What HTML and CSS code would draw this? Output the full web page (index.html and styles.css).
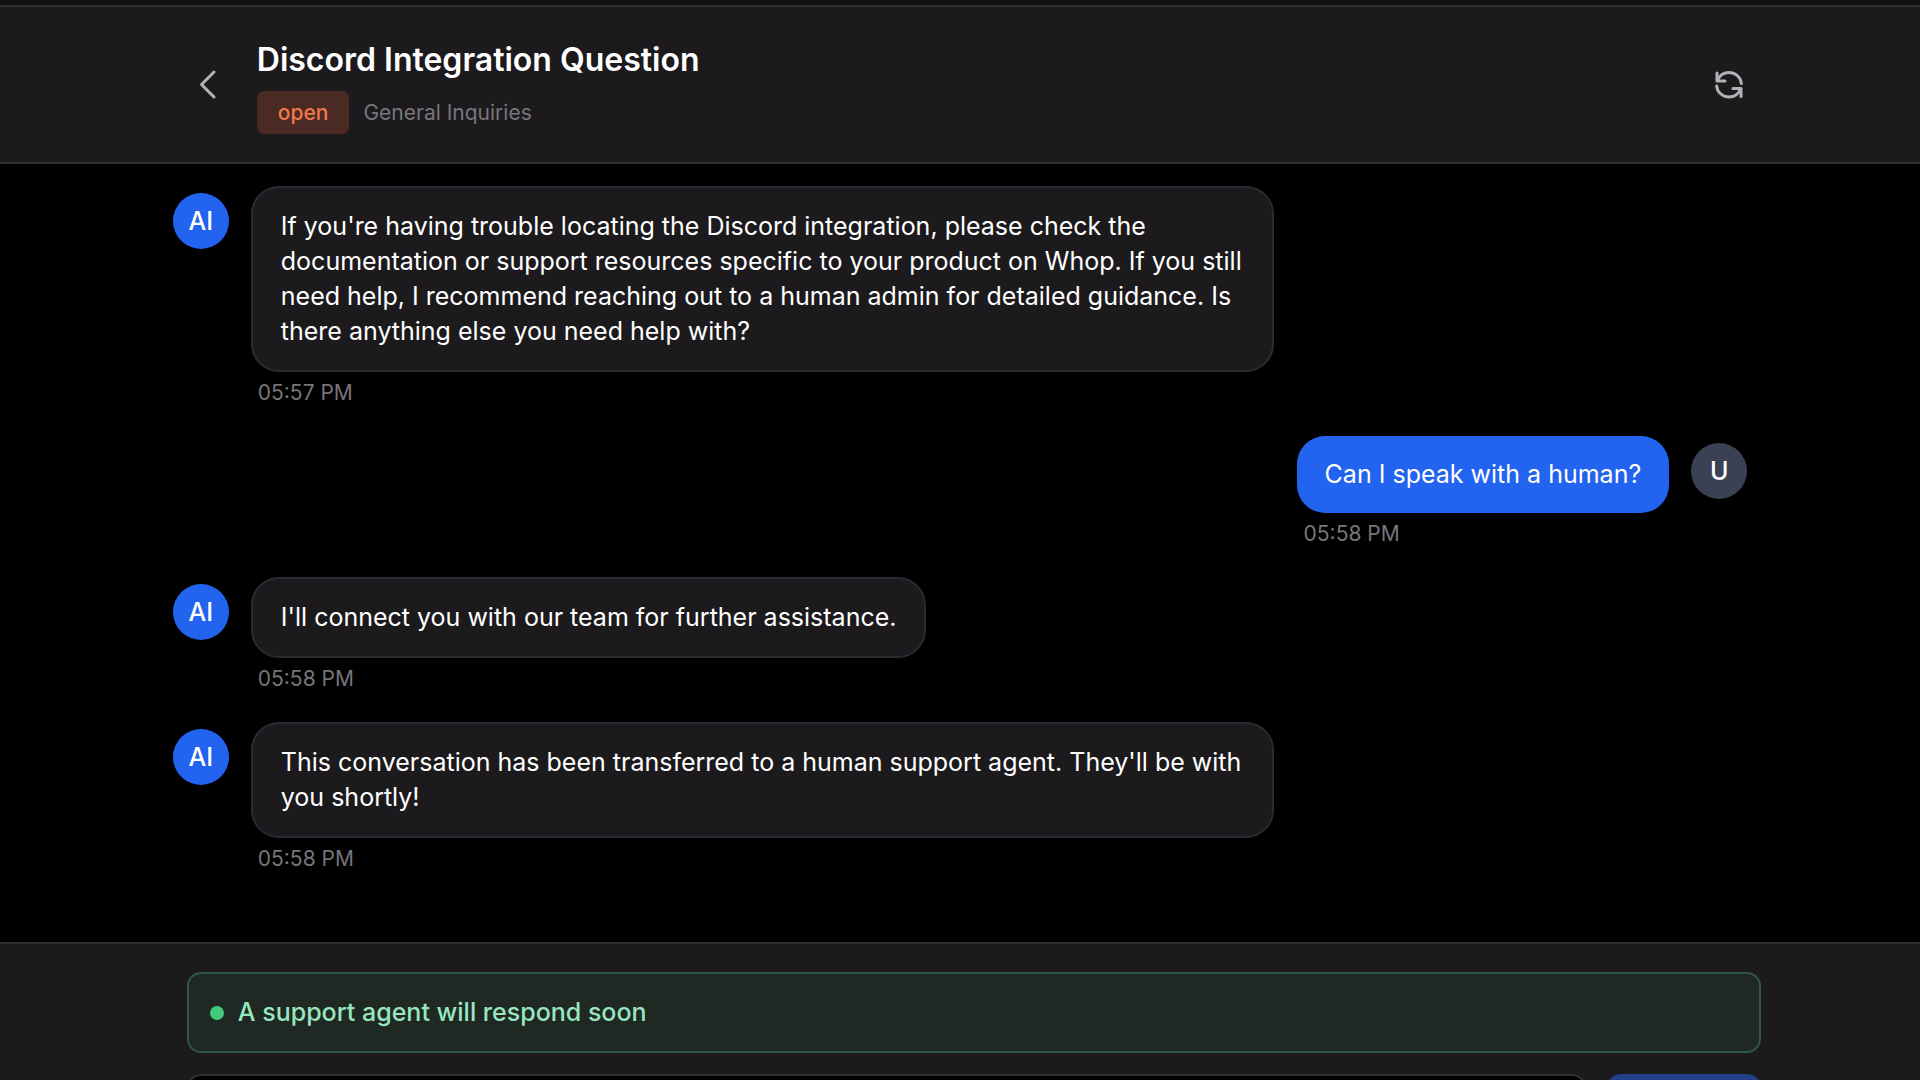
FILE: index.html
```html
<!DOCTYPE html>
<html lang="en">
<head>
    <meta charset="UTF-8">
    <meta name="viewport" content="width=device-width, initial-scale=1.0">
    <title>Discord Integration Question</title>
    <link rel="stylesheet" href="styles.css">
</head>
<body>
    <div class="top-strip"></div>

    <header class="chat-header">
        <div class="container header-row">
            <button class="icon-btn back-btn" type="button" aria-label="Back">
                <svg width="42" height="42" viewBox="0 0 42 42" fill="none" stroke="currentColor" stroke-width="3" stroke-linecap="round" stroke-linejoin="round">
                    <path d="M27 8 L14.500 20.500 L27 33"/>
                </svg>
            </button>
            <div class="header-info">
                <h1>Discord Integration Question</h1>
                <div class="meta">
                    <span class="badge">open</span>
                    <span class="category">General Inquiries</span>
                </div>
            </div>
            <button class="icon-btn refresh-btn" type="button" aria-label="Refresh">
                <svg width="36" height="36" viewBox="0 0 36 36" fill="none" stroke="currentColor" stroke-width="3" stroke-linecap="round" stroke-linejoin="round">
                    <path d="M6 6V14H14"/>
                    <path d="M6.500 13.500C8.500 8.500 13 5.500 18 5.500C24.500 5.500 30 10.500 30.300 16.500"/>
                    <path d="M30 29.500V21.500H22"/>
                    <path d="M29.500 22C27.500 27 23 30 18 30C11.500 30 6 25 5.700 19"/>
                </svg>
            </button>
        </div>
    </header>

    <main class="messages">
        <div class="container message-list">
            <div class="message">
                <div class="avatar">AI</div>
                <div class="message-body">
                    <p class="bubble">If you're having trouble locating the Discord integration, please check the documentation or support resources specific to your product on Whop. If you still need help, I recommend reaching out to a human admin for detailed guidance. Is there anything else you need help with?</p>
                    <time class="time">05:57 PM</time>
                </div>
            </div>

            <div class="message user">
                <div class="avatar">U</div>
                <div class="message-body">
                    <p class="bubble">Can I speak with a human?</p>
                    <time class="time">05:58 PM</time>
                </div>
            </div>

            <div class="message">
                <div class="avatar">AI</div>
                <div class="message-body">
                    <p class="bubble">I'll connect you with our team for further assistance.</p>
                    <time class="time">05:58 PM</time>
                </div>
            </div>

            <div class="message">
                <div class="avatar">AI</div>
                <div class="message-body">
                    <p class="bubble">This conversation has been transferred to a human support agent. They'll be with you shortly!</p>
                    <time class="time">05:58 PM</time>
                </div>
            </div>
        </div>
    </main>

    <footer class="chat-footer">
        <div class="container">
            <div class="notice" role="status">
                <span class="dot"></span>
                <span>A support agent will respond soon</span>
            </div>
            <form class="composer">
                <input class="composer-input" type="text" aria-label="Message">
                <button class="send-btn" type="submit" aria-label="Send" disabled>
                    <svg width="28" height="28" viewBox="0 0 28 28" fill="none" stroke="currentColor" stroke-width="3" stroke-linecap="round" stroke-linejoin="round">
                        <path d="M4 14H24M15 5L24 14L15 23"/>
                    </svg>
                </button>
            </form>
        </div>
    </footer>
</body>
</html>
```

FILE: styles.css
```css
* {
    box-sizing: border-box;
}
body {
    margin: 0;
    height: 100vh;
    overflow: hidden;
    background: #000;
    color: #fff;
    font-family: Inter, "Liberation Sans", sans-serif;
    font-size: 25px;
    line-height: 35px;
}
h1, p {
    margin: 0;
}
button, input {
    font: inherit;
}
.container {
    width: 82vw;
    margin: 0 auto;
}
.top-strip {
    height: 5px;
    background: #121013;
}

/* header */
.chat-header {
    background: #1c1a1d;
    border-top: 2px solid #2f2e31;
    border-bottom: 2px solid #2f2e31;
    padding: 28px 0 28px 28px;
}
.header-row {
    display: flex;
    align-items: center;
}
.icon-btn {
    display: flex;
    padding: 0;
    border: none;
    background: none;
    color: #b4b2b6;
    cursor: pointer;
}
.back-btn {
    margin-right: 28px;
}
.refresh-btn {
    padding: 14px;
}
.header-info {
    flex: 1;
}
h1 {
    font-size: 32px;
    font-weight: 600;
    line-height: 49px;
}
.meta {
    display: flex;
    align-items: center;
    gap: 14px;
    margin-top: 7px;
    font-size: 21px;
}
.badge {
    padding: 4px 21px;
    border-radius: 7px;
    background: #4a2a22;
    color: #f2784b;
    font-weight: 500;
}
.category {
    color: #77757a;
}

/* messages */
.messages {
    padding: 22px 0 69px;
}
.message-list {
    display: flex;
    flex-direction: column;
    gap: 29px;
}
.message {
    display: flex;
    align-items: flex-start;
    gap: 22px;
}
.message.user {
    flex-direction: row-reverse;
}
.avatar {
    flex: none;
    width: 56px;
    height: 56px;
    margin-top: 7px;
    border-radius: 50%;
    background: #2263f0;
    font-weight: 500;
    line-height: 56px;
    text-align: center;
}
.message-body {
    max-width: 65%;
}
.bubble {
    padding: 21px 28px;
    border: 2px solid #2b2932;
    border-radius: 28px;
    background: #1c1a1d;
}
.user .avatar {
    background: #3b4154;
}
.user .bubble {
    border: none;
    background: #2263f0;
}
.time {
    display: block;
    margin: 7px 7px 0;
    color: #77757a;
    font-size: 21px;
    line-height: 28px;
}

/* footer */
.chat-footer {
    background: #1c1a1d;
    border-top: 2px solid #2f2e31;
    padding: 28px 0 28px 28px;
}
.notice {
    display: flex;
    align-items: center;
    gap: 14px;
    padding: 21px;
    border: 2px solid #2f5745;
    border-radius: 14px;
    background: #1f2822;
    color: #98e6c0;
    font-weight: 500;
}
.dot {
    width: 14px;
    height: 14px;
    border-radius: 50%;
    background: #43cb7c;
}
.composer {
    display: flex;
    gap: 21px;
    margin-top: 21px;
}
.composer-input {
    flex: 1;
    height: 77px;
    padding: 0 28px;
    border: 2px solid #2f2e31;
    border-radius: 14px;
    background: #000;
    color: #fff;
}
.send-btn {
    width: 154px;
    border: none;
    border-radius: 14px;
    background: #233f88;
    color: #9aa3bd;
}
```
